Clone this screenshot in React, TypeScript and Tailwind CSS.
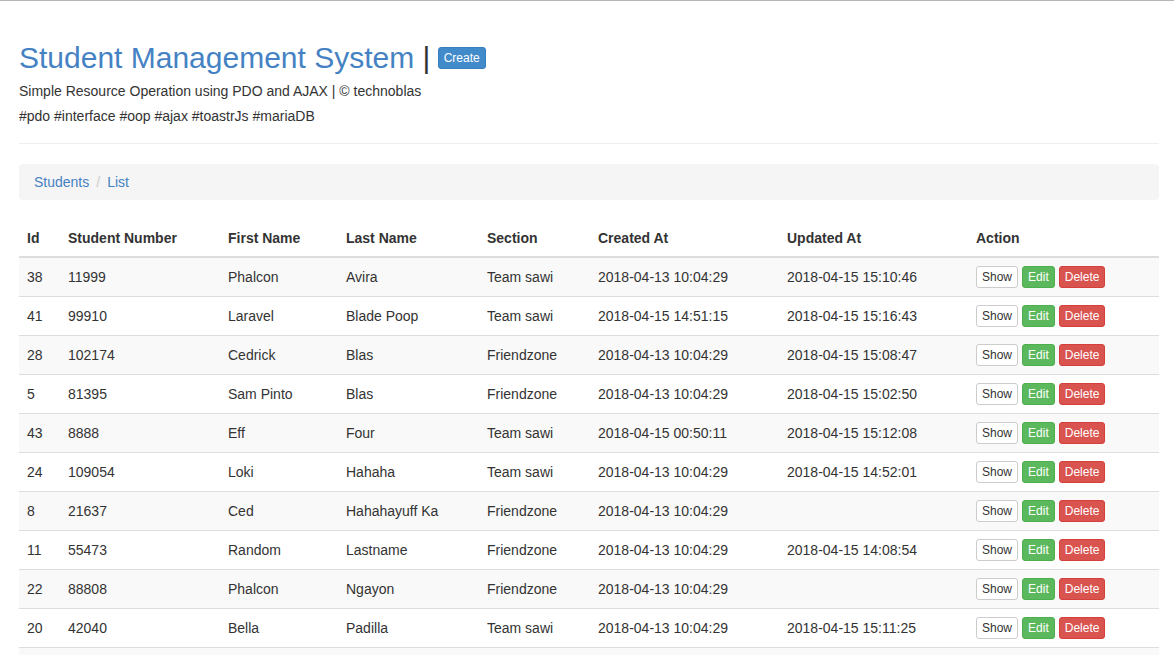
import React from "react";

type Student = {
  id: number;
  number: string;
  first: string;
  last: string;
  section: string;
  created: string;
  updated: string;
};

const students: Student[] = [
  { id: 38, number: "11999", first: "Phalcon", last: "Avira", section: "Team sawi", created: "2018-04-13 10:04:29", updated: "2018-04-15 15:10:46" },
  { id: 41, number: "99910", first: "Laravel", last: "Blade Poop", section: "Team sawi", created: "2018-04-15 14:51:15", updated: "2018-04-15 15:16:43" },
  { id: 28, number: "102174", first: "Cedrick", last: "Blas", section: "Friendzone", created: "2018-04-13 10:04:29", updated: "2018-04-15 15:08:47" },
  { id: 5, number: "81395", first: "Sam Pinto", last: "Blas", section: "Friendzone", created: "2018-04-13 10:04:29", updated: "2018-04-15 15:02:50" },
  { id: 43, number: "8888", first: "Eff", last: "Four", section: "Team sawi", created: "2018-04-15 00:50:11", updated: "2018-04-15 15:12:08" },
  { id: 24, number: "109054", first: "Loki", last: "Hahaha", section: "Team sawi", created: "2018-04-13 10:04:29", updated: "2018-04-15 14:52:01" },
  { id: 8, number: "21637", first: "Ced", last: "Hahahayuff Ka", section: "Friendzone", created: "2018-04-13 10:04:29", updated: "" },
  { id: 11, number: "55473", first: "Random", last: "Lastname", section: "Friendzone", created: "2018-04-13 10:04:29", updated: "2018-04-15 14:08:54" },
  { id: 22, number: "88808", first: "Phalcon", last: "Ngayon", section: "Friendzone", created: "2018-04-13 10:04:29", updated: "" },
  { id: 20, number: "42040", first: "Bella", last: "Padilla", section: "Team sawi", created: "2018-04-13 10:04:29", updated: "2018-04-15 15:11:25" },
];

const headers = [
  { label: "Id", w: "w-[41px]" },
  { label: "Student Number", w: "w-[160px]" },
  { label: "First Name", w: "w-[118px]" },
  { label: "Last Name", w: "w-[141px]" },
  { label: "Section", w: "w-[111px]" },
  { label: "Created At", w: "w-[189px]" },
  { label: "Updated At", w: "w-[189px]" },
  { label: "Action", w: "w-[191px]" },
];

const btn = "text-[12px] leading-[18px] px-[5px] py-[1px] rounded-[3px] border";

export default function App() {
  return (
    <div className="h-[655px] bg-white border-t border-[#b5b5b5] font-['Liberation_Sans',Arial,sans-serif] text-[14px] leading-5 text-[#333] overflow-hidden">
      <div className="px-[19px] w-[1178px]">
        {/* Page header */}
        <div className="pt-[40px]">
          <h1 className="flex items-center text-[30px] leading-[33px] font-normal whitespace-pre">
            <a href="#" className="text-[#4582c3]">Student Management System</a>
            <span className="text-[#333]"> | </span>
            <button className={`${btn} ml-[-1px] mt-[1px] bg-[#428bca] border-[#357ebd] text-white`}>
              Create
            </button>
          </h1>
          <p className="mt-[7px]">Simple Resource Operation using PDO and AJAX | © technoblas</p>
          <p className="mt-[5px]">#pdo #interface #oop #ajax #toastrJs #mariaDB</p>
        </div>
        <hr className="mt-[17px] border-t border-[#eee]" />

        {/* Breadcrumb */}
        <div className="mt-[20px] w-[1140px] bg-[#f5f5f5] rounded px-[15px] py-[8px] flex items-center">
          <a href="#" className="text-[#4582c3]">Students</a>
          <span className="px-[7px] text-[#ccc]">/</span>
          <a href="#" className="text-[#4582c3]">List</a>
        </div>

        {/* Table */}
        <table className="mt-[20px] w-[1140px] border-collapse table-fixed">
          <thead>
            <tr>
              {headers.map((h) => (
                <th key={h.label} className={`${h.w} text-left font-bold p-[8px] border-b-2 border-[#ddd]`}>
                  {h.label}
                </th>
              ))}
            </tr>
          </thead>
          <tbody>
            {students.map((s, i) => (
              <tr key={s.id} className={i % 2 === 0 ? "bg-[#f9f9f9]" : "bg-white"}>
                <td className="p-[8px] border-t border-[#ddd]">{s.id}</td>
                <td className="p-[8px] border-t border-[#ddd]">{s.number}</td>
                <td className="p-[8px] border-t border-[#ddd]">{s.first}</td>
                <td className="p-[8px] border-t border-[#ddd]">{s.last}</td>
                <td className="p-[8px] border-t border-[#ddd]">{s.section}</td>
                <td className="p-[8px] border-t border-[#ddd]">{s.created}</td>
                <td className="p-[8px] border-t border-[#ddd]">{s.updated}</td>
                <td className="p-[8px] border-t border-[#ddd]">
                  <div className="flex gap-[4px]">
                    <button className={`${btn} bg-white border-[#ccc] text-[#333]`}>Show</button>
                    <button className={`${btn} bg-[#5cb85c] border-[#4cae4c] text-white`}>Edit</button>
                    <button className={`${btn} bg-[#d9534f] border-[#d43f3a] text-white`}>Delete</button>
                  </div>
                </td>
              </tr>
            ))}
            {/* next row, scrolled below the fold */}
            <tr className="bg-[#f9f9f9]">
              <td colSpan={8} className="h-[39px] border-t border-[#ddd]"></td>
            </tr>
          </tbody>
        </table>
      </div>
    </div>
  );
}
